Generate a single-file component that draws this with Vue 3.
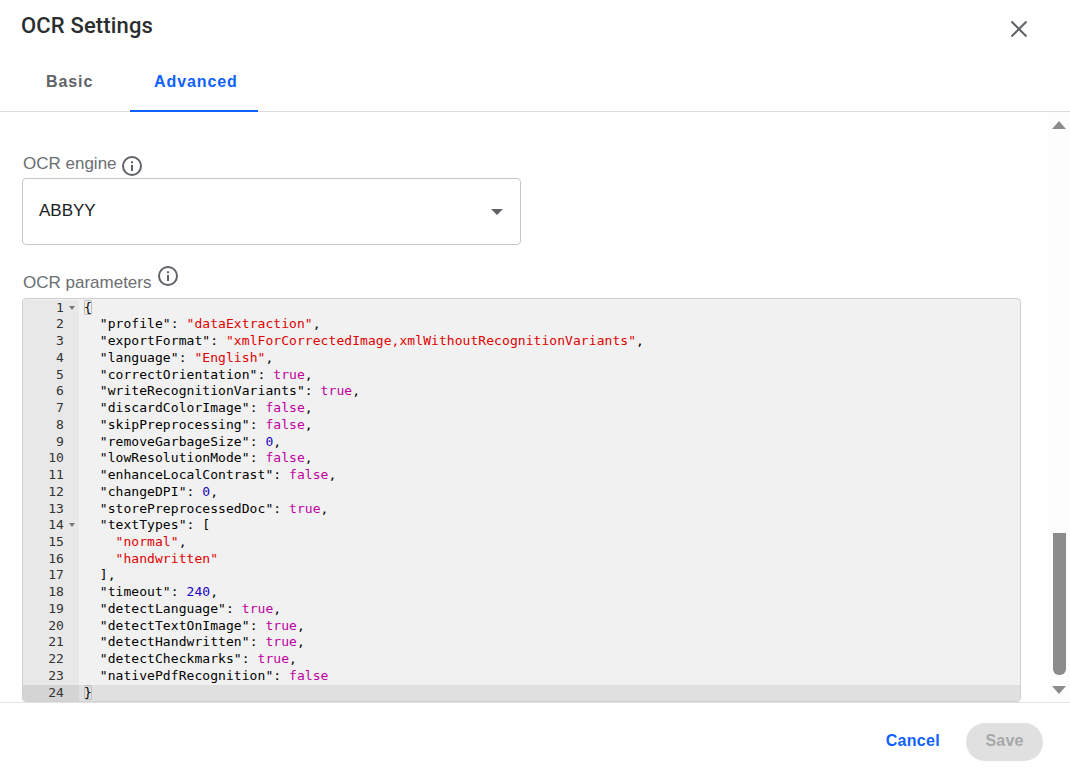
<template>
  <div class="dialog">
    <header class="head">
      <h1 class="title">OCR Settings</h1>
      <button class="close" aria-label="Close">
        <svg width="18" height="18" viewBox="0 0 18 18"><path d="M1.5 1.5 16.5 16.5M16.5 1.5 1.5 16.5" stroke="#5f6368" stroke-width="2" fill="none" /></svg>
      </button>
    </header>

    <nav class="tabs">
      <div class="tab">Basic</div>
      <div class="tab tab--active">Advanced</div>
    </nav>

    <div class="body">
      <div class="content">
        <label class="label label--engine">OCR engine
          <svg class="info" width="22" height="22" viewBox="0 0 22 22"><circle cx="11" cy="11" r="9" fill="none" stroke="#5f6368" stroke-width="2" /><path d="M10 10h2v6h-2zM10 6.2h2v2h-2z" fill="#5f6368" /></svg>
        </label>
        <div class="select">
          <span>ABBYY</span>
          <i class="caret"></i>
        </div>

        <label class="label label--params">OCR parameters
          <svg class="info info--up" width="22" height="22" viewBox="0 0 22 22"><circle cx="11" cy="11" r="9" fill="none" stroke="#5f6368" stroke-width="2" /><path d="M10 10h2v6h-2zM10 6.2h2v2h-2z" fill="#5f6368" /></svg>
        </label>
        <div class="editor">
          <div v-for="(line, i) in lines" :key="i" class="row" :class="{ 'row--active': i === lines.length - 1 }">
            <div class="gutter">
              {{ i + 1 }}<i v-if="line.fold" class="fold"></i>
            </div>
            <div class="code"><span v-for="(t, j) in line.tokens" :key="j" :class="t[0]">{{ t[1] }}</span></div>
          </div>
        </div>
      </div>

      <div class="scrollbar">
        <i class="arrow arrow--up"></i>
        <div class="track"><div class="thumb"></div></div>
        <i class="arrow arrow--down"></i>
      </div>
    </div>

    <footer class="foot">
      <button class="btn-cancel">Cancel</button>
      <button class="btn-save" disabled>Save</button>
    </footer>
  </div>
</template>

<script setup>
function prop(key, val, type, comma = true) {
  const tokens = [['p', '  "' + key + '"'], ['p', ': '], [type, val]]
  if (comma) tokens.push(['p', ','])
  return { tokens }
}

const lines = [
  { fold: true, tokens: [['brace', '{']] },
  prop('profile', '"dataExtraction"', 's'),
  prop('exportFormat', '"xmlForCorrectedImage,xmlWithoutRecognitionVariants"', 's'),
  prop('language', '"English"', 's'),
  prop('correctOrientation', 'true', 'b'),
  prop('writeRecognitionVariants', 'true', 'b'),
  prop('discardColorImage', 'false', 'b'),
  prop('skipPreprocessing', 'false', 'b'),
  prop('removeGarbageSize', '0', 'n'),
  prop('lowResolutionMode', 'false', 'b'),
  prop('enhanceLocalContrast', 'false', 'b'),
  prop('changeDPI', '0', 'n'),
  prop('storePreprocessedDoc', 'true', 'b'),
  { fold: true, tokens: [['p', '  "textTypes": [']] },
  { tokens: [['p', '    '], ['s', '"normal"'], ['p', ',']] },
  { tokens: [['p', '    '], ['s', '"handwritten"']] },
  { tokens: [['p', '  ],']] },
  prop('timeout', '240', 'n'),
  prop('detectLanguage', 'true', 'b'),
  prop('detectTextOnImage', 'true', 'b'),
  prop('detectHandwritten', 'true', 'b'),
  prop('detectCheckmarks', 'true', 'b'),
  prop('nativePdfRecognition', 'false', 'b', false),
  { tokens: [['brace', '}']] },
]
</script>

<style>
html, body { background: #fff; overflow: hidden; }
</style>

<style scoped>
.dialog {
  width: 1070px;
  height: 770px;
  display: flex;
  flex-direction: column;
  font-family: "Liberation Sans", Arial, sans-serif;
  color: #202124;
}
.head {
  height: 62px;
  padding: 0 42px 0 21px;
  display: flex;
  justify-content: space-between;
  align-items: flex-start;
  flex: none;
}
.title {
  margin: 14px 0 0;
  font: 500 22px/24px Roboto, "Open Sans", sans-serif;
  letter-spacing: 0.15px;
  color: #2b2e31;
}
.close { margin-top: 20px; padding: 0; border: 0; background: none; width: 18px; height: 18px; display: block; }
.close svg { display: block; }
.tabs {
  height: 50px;
  flex: none;
  display: flex;
  padding-left: 10px;
  border-bottom: 1px solid #dddddd;
  box-sizing: border-box;
}
.tab {
  font: 700 16px/40px "Liberation Sans", Arial, sans-serif;
  letter-spacing: 0.9px;
  padding: 0 37px 0 36px;
  width: 120px;
  color: #5f6368;
  height: 50px;
  box-sizing: border-box;
}
.tab--active {
  color: #0f62fe;
  padding: 0 0 0 24px;
  width: 128px;
  border-bottom: 2px solid #0f62fe;
}
.body { flex: 1; display: flex; min-height: 0; }
.content { width: 1048px; padding-left: 22px; box-sizing: border-box; }
.label {
  display: flex;
  align-items: flex-start;
  font-size: 17px;
  line-height: 20px;
  color: #6b6e72;
  padding-left: 1px;
}
.label--engine { margin-top: 42px; height: 24px; }
.label--params { margin-top: 28px; height: 25px; }
.info { margin: 1px 0 0 4px; }
.info--up { margin: -8px 0 0 6px; }
.select {
  width: 499px;
  height: 67px;
  box-sizing: border-box;
  border: 1px solid #c4c7c9;
  border-radius: 4px;
  padding: 23px 17px 0 16px;
  display: flex;
  justify-content: space-between;
  font-size: 17px;
  line-height: 18px;
  color: #202124;
}
.caret {
  margin-top: 7px;
  width: 0;
  height: 0;
  border: 6px solid transparent;
  border-top: 6px solid #5f6368;
  border-bottom: 0;
}
.editor {
  width: 999px;
  height: 404px;
  box-sizing: border-box;
  border: 1px solid #cfcfcf;
  border-radius: 4px;
  background: #f1f1f1;
  overflow: hidden;
  padding-top: 0.7px;
  font: 13px/16.74px "DejaVu Sans Mono", "Liberation Mono", monospace;
  letter-spacing: 0.06px;
  color: #000;
}
.row { display: flex; height: 16.74px; }
.row--active { background: #e0e0e0; }
.gutter {
  width: 56px;
  flex: none;
  box-sizing: border-box;
  background: #e8e8e8;
  text-align: right;
  padding-right: 15px;
  color: #333;
  position: relative;
}
.row--active .gutter { background: #d4d4d4; }
.fold {
  position: absolute;
  left: 46px;
  top: 6px;
  border: 3.5px solid transparent;
  border-top: 4px solid #777;
  border-bottom: 0;
}
.code { padding-left: 5px; white-space: pre; }
.p { color: #000; }
.s { color: #e00000; }
.b { color: #c000a0; }
.n { color: #2000c0; }
.brace { box-shadow: inset 0 0 0 1px #bdbdbd; border-radius: 2px; }
.scrollbar {
  width: 22px;
  flex: none;
  background: #fdfdfd;
  display: flex;
  flex-direction: column;
  align-items: center;
  padding: 9px 0 8px;
  box-sizing: border-box;
  height: 590px;
}
.arrow { width: 0; height: 0; border-left: 7.5px solid transparent; border-right: 7.5px solid transparent; }
.arrow--up { border-bottom: 8px solid #8c8c8c; }
.arrow--down { border-top: 8px solid #8c8c8c; }
.track { flex: 1; width: 13px; display: flex; flex-direction: column; justify-content: flex-end; padding-bottom: 11px; }
.thumb { height: 142px; background: #8c8c8c; border-radius: 0 0 6px 6px; }
.foot {
  height: 68px;
  flex: none;
  border-top: 1px solid #e3e3e3;
  box-sizing: border-box;
  display: flex;
  justify-content: flex-end;
  align-items: flex-start;
  padding: 20px 27px 0 0;
}
.btn-cancel, .btn-save {
  font: 700 16px/36px "Liberation Sans", Arial, sans-serif;
  border: 0;
  padding: 0 0 2px;
  height: 38px;
  border-radius: 19px;
}
.btn-cancel { background: none; color: #0f62fe; margin-right: 26px; letter-spacing: 0.3px; }
.btn-save { background: #e0e0e0; color: #a8a8a8; width: 77px; letter-spacing: 0.2px; }
</style>
